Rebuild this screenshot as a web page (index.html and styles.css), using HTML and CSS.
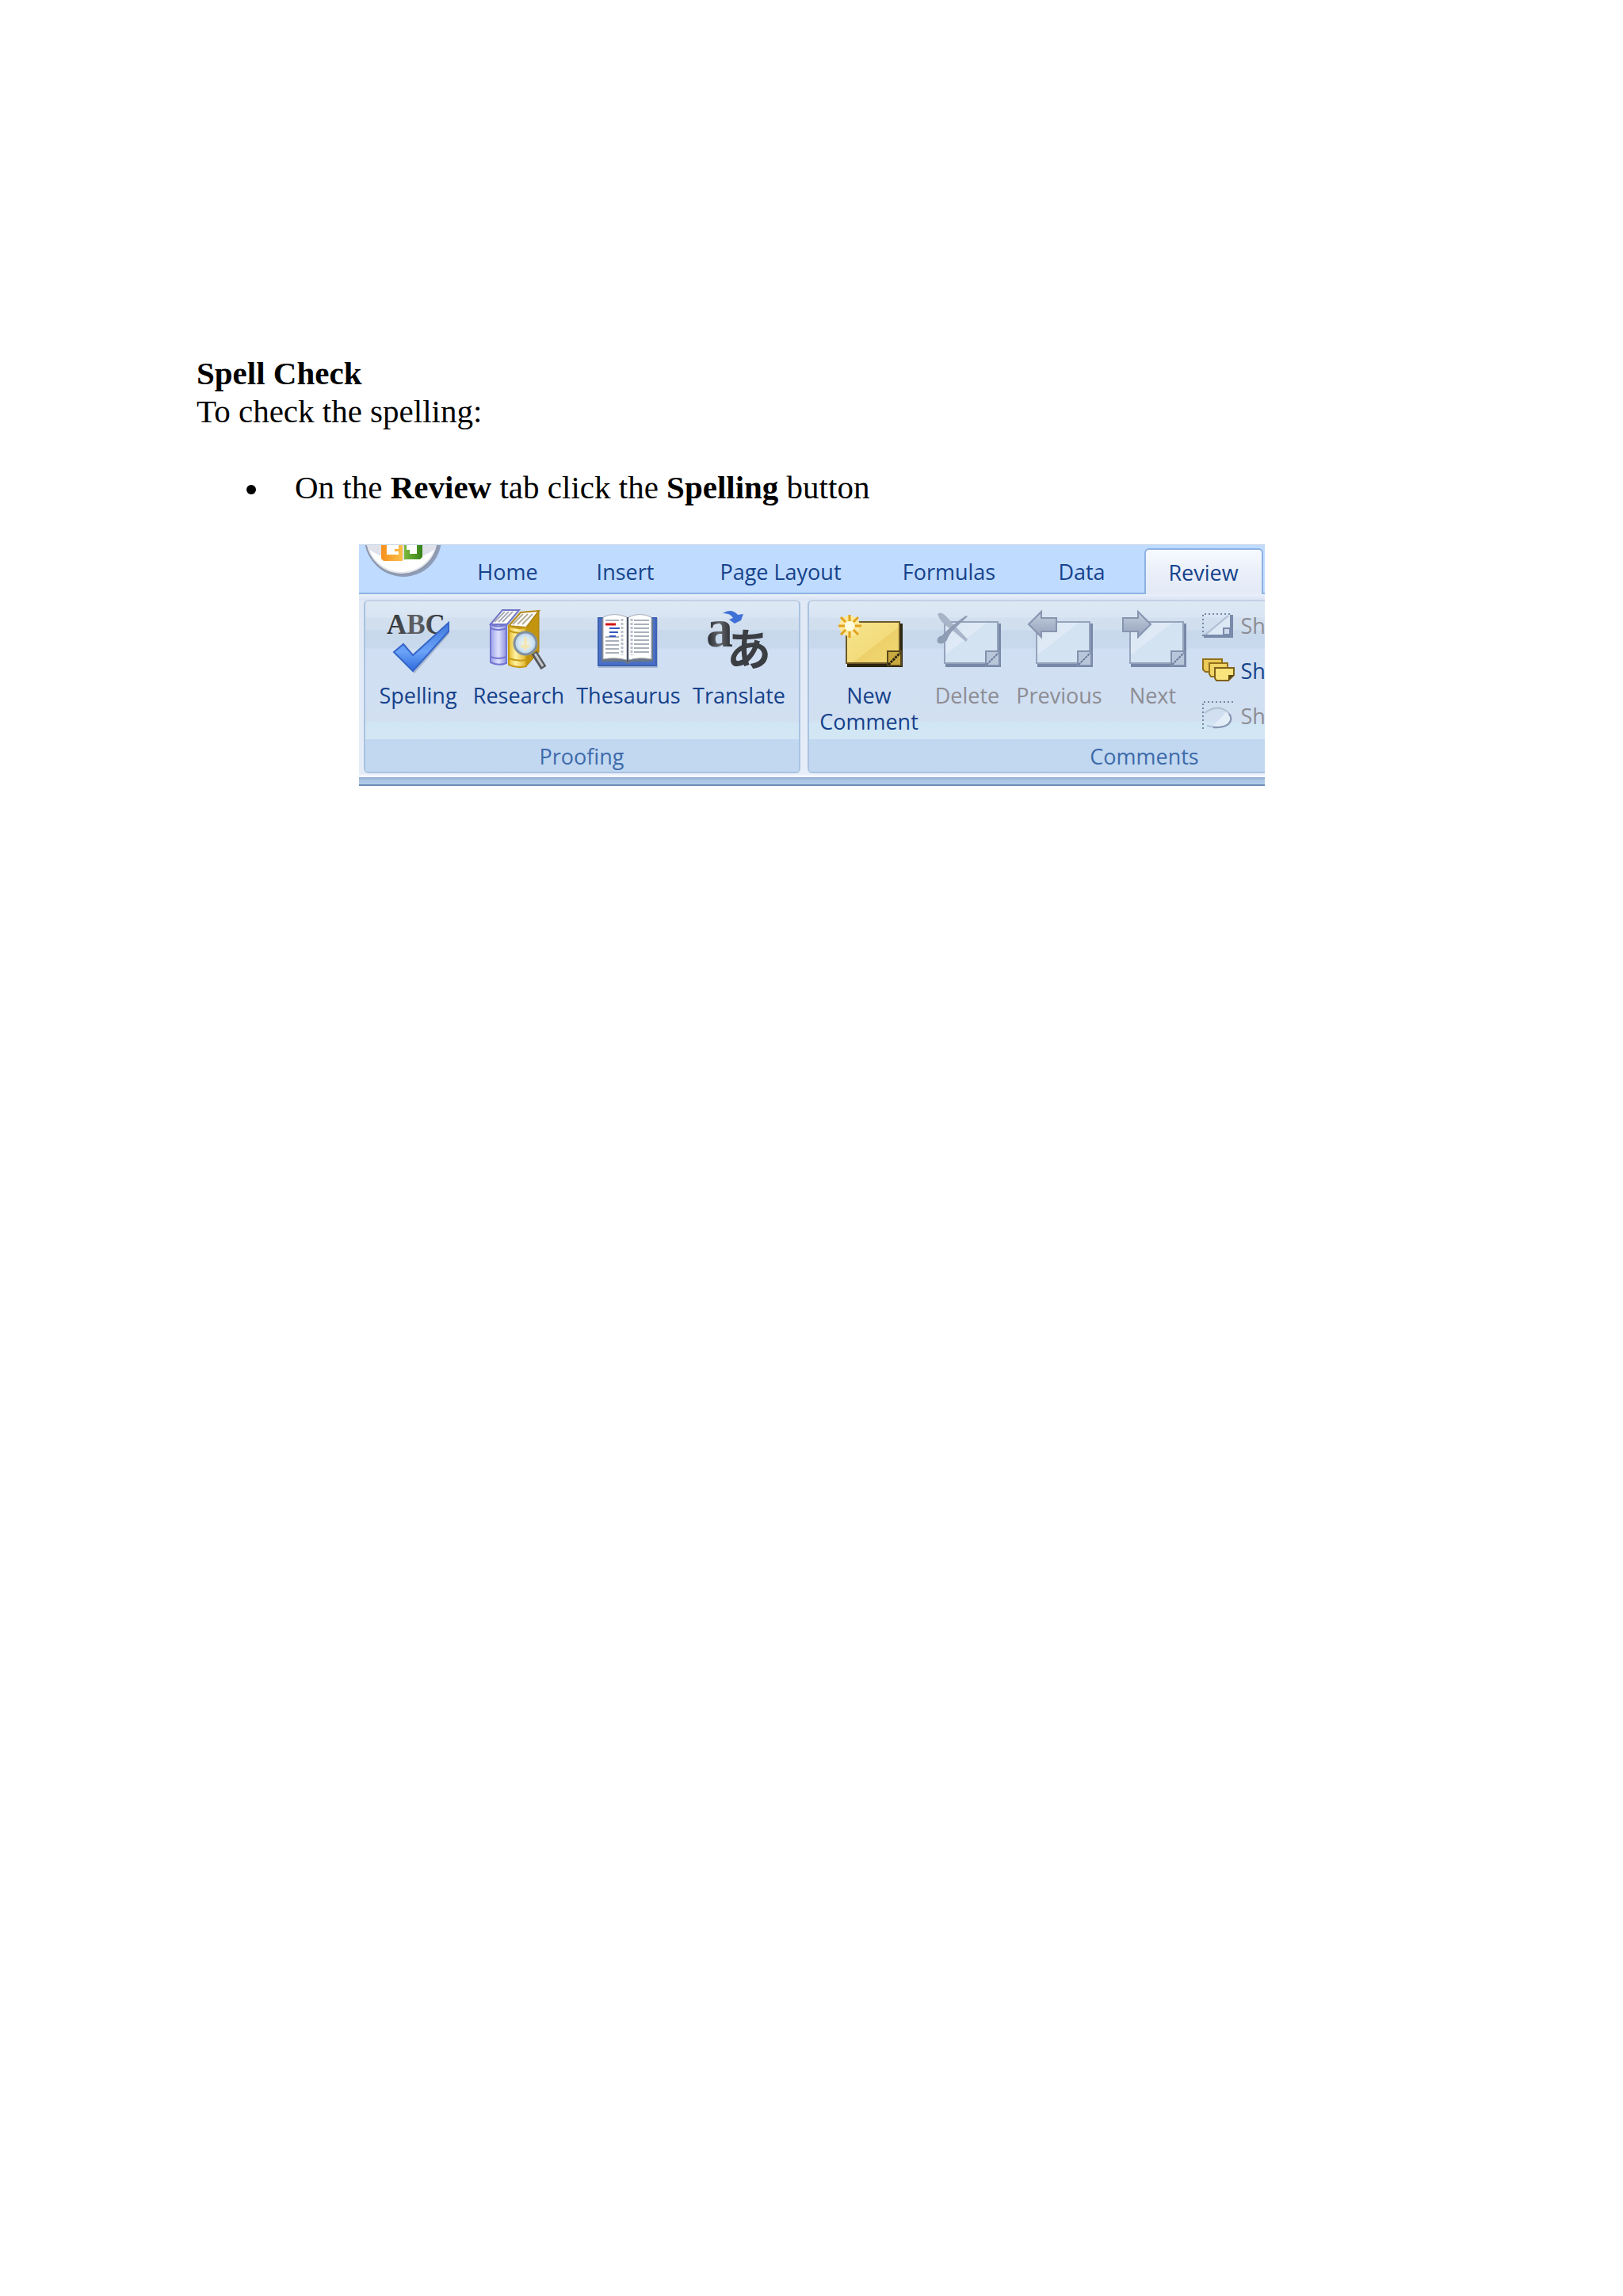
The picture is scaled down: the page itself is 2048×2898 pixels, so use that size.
FILE: index.html
```html
<!DOCTYPE html>
<html lang="en">
<head>
    <meta charset="UTF-8">
    <meta name="viewport" content="width=device-width, initial-scale=1.0">
    <title>Spell Check</title>
    <link rel="stylesheet" href="styles.css">
</head>
<body>
    <svg class="defs" aria-hidden="true">
        <defs>
            <linearGradient id="yellow" x1="0" y1="0" x2="1" y2="1">
                <stop offset="0" stop-color="#f7e48e"/>
                <stop offset="0.55" stop-color="#f3dc7c"/>
                <stop offset="0.56" stop-color="#edd06a"/>
                <stop offset="1" stop-color="#f2d974"/>
            </linearGradient>
            <linearGradient id="pale" x1="0" y1="0" x2="1" y2="1">
                <stop offset="0" stop-color="#dbe6f5"/>
                <stop offset="0.4" stop-color="#dfeaf6"/>
                <stop offset="0.41" stop-color="#d3e3f2"/>
                <stop offset="1" stop-color="#d6e4f3"/>
            </linearGradient>
            <linearGradient id="shade" x1="0" y1="0" x2="0" y2="1">
                <stop offset="0" stop-color="#c3cede"/>
                <stop offset="1" stop-color="#93a1ba"/>
            </linearGradient>
            <linearGradient id="tick" x1="0" y1="0" x2="0" y2="1">
                <stop offset="0" stop-color="#3f78dc"/>
                <stop offset="0.6" stop-color="#6ba3f8"/>
                <stop offset="1" stop-color="#2d69dc"/>
            </linearGradient>
            <linearGradient id="purple" x1="0" y1="0" x2="1" y2="0">
                <stop offset="0" stop-color="#9da0ea"/>
                <stop offset="0.5" stop-color="#dde2fd"/>
                <stop offset="1" stop-color="#8c8fe0"/>
            </linearGradient>
            <linearGradient id="gold" x1="0" y1="0" x2="1" y2="0">
                <stop offset="0" stop-color="#e5bd30"/>
                <stop offset="0.4" stop-color="#fff3a4"/>
                <stop offset="1" stop-color="#e0b52c"/>
            </linearGradient>
            <linearGradient id="ink" x1="0" y1="0" x2="1" y2="0">
                <stop offset="0" stop-color="#25282c"/>
                <stop offset="0.5" stop-color="#63666a"/>
                <stop offset="1" stop-color="#25282c"/>
            </linearGradient>
            <linearGradient id="orange" x1="0" y1="0" x2="1" y2="0">
                <stop offset="0" stop-color="#f7901e"/>
                <stop offset="1" stop-color="#fbc04a"/>
            </linearGradient>
            <linearGradient id="green" x1="0" y1="0" x2="1" y2="0">
                <stop offset="0" stop-color="#7cba3c"/>
                <stop offset="1" stop-color="#348018"/>
            </linearGradient>
            <radialGradient id="lens">
                <stop offset="0" stop-color="#f7f4d8"/>
                <stop offset="0.6" stop-color="#d3e6f4"/>
                <stop offset="1" stop-color="#b3d0ea"/>
            </radialGradient>
            <symbol id="note-yellow" viewBox="0 0 96 84">
                <path d="M20 20H90V75H20z" fill="#2a2410"/>
                <path d="M19 18H86V70H19z" fill="url(#yellow)" stroke="#6d5a2a" stroke-width="2"/>
                <path d="M71 55H88V73H71z" fill="#c9a93f" stroke="#5b4a1c" stroke-width="2"/>
                <path d="M72 72L87 57" stroke="#2a2410" stroke-width="3" stroke-dasharray="3 1"/>
            </symbol>
            <symbol id="note-pale" viewBox="0 0 96 84">
                <path d="M20 20H90V75H20z" fill="#7888a8"/>
                <path d="M19 18H86V70H19z" fill="url(#pale)" stroke="#95a3bc" stroke-width="2"/>
                <path d="M71 55H88V73H71z" fill="#b9c6da" stroke="#8291ad" stroke-width="2"/>
                <path d="M72 72L87 57" stroke="#6a7a9b" stroke-width="2" stroke-dasharray="3 1"/>
            </symbol>
        </defs>
    </svg>

    <main class="page">
        <h1>Spell Check</h1>
        <p>To check the spelling:</p>
        <ul class="steps">
            <li><span>On the <b>Review</b> tab click the <b>Spelling</b> button</span></li>
        </ul>

        <div class="ribbon">
            <div class="tabs">
                <!-- office button, top half cut off -->
                <svg class="orb" viewBox="0 0 112 61" aria-hidden="true">
                    <circle cx="56" cy="-8" r="48" fill="#8f9db8"/>
                    <circle cx="54" cy="-9" r="46" fill="#dfe2ea" stroke="#8d97ab" stroke-width="2"/>
                    <path d="M13 6Q54 32 95 6A44 44 0 0 1 13 6z" fill="#fff"/>
                    <path d="M28 -6H55V20H31L28 17z" fill="url(#orange)"/>
                    <path d="M35 -6H50V5H45V8H50V12H35z" fill="#fff"/>
                    <path d="M57 -6H80V15L77 18H57z" fill="url(#green)"/>
                    <path d="M60 -6H73V11H64V6H60z" fill="#fff"/>
                </svg>
                <button type="button">Home</button>
                <button type="button">Insert</button>
                <button type="button">Page Layout</button>
                <button type="button">Formulas</button>
                <button type="button">Data</button>
                <button type="button" class="active">Review</button>
            </div>

            <div class="groups">
                <section class="group proofing">
                    <div class="tools">
                        <button type="button" class="tool">
                            <svg viewBox="0 0 96 84" aria-hidden="true">
                                <text x="8" y="33" font-family="Liberation Serif, serif" font-weight="bold" font-size="35" fill="url(#ink)">ABC</text>
                                <path d="M18 57L30 49L43 64L87 23V33L43 83z" fill="#a9b8d0"/>
                                <path d="M17 56L29 46L41 60L86 19V30L41 80z" fill="url(#tick)" stroke="#3566c8" stroke-width="2"/>
                            </svg>
                            <span>Spelling</span>
                        </button>
                        <button type="button" class="tool">
                            <svg viewBox="0 0 96 84" aria-hidden="true">
                                <path d="M12 21L27 3H48L33 21z" fill="#fff" stroke="#7275c4" stroke-width="2"/>
                                <path d="M17 18L30 5M22 18L35 5M27 18L40 5" stroke="#a9abb8" stroke-width="2"/>
                                <path d="M12 21Q22 26 32 21V70Q22 74 12 69z" fill="url(#purple)" stroke="#7376d2" stroke-width="2"/>
                                <path d="M12 26Q22 30 32 26M12 62Q22 66 32 62" fill="none" stroke="#7376d2" stroke-width="2"/>
                                <path d="M35 23L50 6L73 4L57 25z" fill="#fff" stroke="#b68a18" stroke-width="2"/>
                                <path d="M40 21L53 8M46 21L59 8M52 21L65 8" stroke="#b5ae96" stroke-width="2"/>
                                <path d="M57 25L73 4V56L57 74z" fill="#c3950f" stroke="#a67d0c" stroke-width="1"/>
                                <path d="M35 23Q46 28 57 25V74Q46 77 35 72z" fill="url(#gold)" stroke="#c79a16" stroke-width="2"/>
                                <path d="M35 29Q46 34 57 31M35 64Q46 68 57 66" fill="none" stroke="#c79a16" stroke-width="2"/>
                                <path d="M67 57L79 76" stroke="#55585e" stroke-width="8"/>
                                <path d="M68 58L78 74" stroke="#c3c6ca" stroke-width="3"/>
                                <circle cx="56" cy="45" r="14" fill="url(#lens)" stroke="#8290a0" stroke-width="3"/>
                                <path d="M56 37V54M50 49H61" stroke="#f5e6ae" stroke-width="3"/>
                            </svg>
                            <span>Research</span>
                        </button>
                        <button type="button" class="tool">
                            <svg viewBox="0 0 96 84" aria-hidden="true">
                                <path d="M10 13H85V76H10z" fill="#a9b8d3"/>
                                <path d="M9 12H84V74H9z" fill="#3c60b4"/>
                                <path d="M11 14H82V72H11z" fill="#4a70c6"/>
                                <path d="M14 14H79V68H52L47 71L42 68H14z" fill="#6b7785"/>
                                <path d="M16 12Q30 5 46 12V66Q32 62 16 65z" fill="#fff" stroke="#a3abb7" stroke-width="1"/>
                                <path d="M48 12Q62 5 77 12V65Q62 62 48 66z" fill="#fff" stroke="#a3abb7" stroke-width="1"/>
                                <path d="M47 12V68" stroke="#4b5360" stroke-width="2"/>
                                <path d="M19 16H36M19 37H36M19 42H36M19 47H36M19 52H36M19 57H36M55 16H74M55 21H74M55 26H74M55 31H74M55 36H74M55 41H74M55 46H74M55 51H74M55 56H74" stroke="#a9b0bb" stroke-width="2"/>
                                <path d="M40 14V60M52 14V60" stroke="#b8bec9" stroke-width="3" stroke-dasharray="3 2"/>
                                <path d="M19 21H32" stroke="#d61414" stroke-width="3"/>
                                <path d="M24 26H37M24 31H35M24 36H32" stroke="#3459c4" stroke-width="2"/>
                            </svg>
                            <span>Thesaurus</span>
                        </button>
                        <button type="button" class="tool">
                            <svg viewBox="0 0 96 84" aria-hidden="true">
                                <text x="6" y="49" font-family="Liberation Serif, serif" font-weight="bold" font-size="68" fill="url(#ink)">a</text>
                                <text x="32" y="73" font-family="Noto Sans CJK JP, sans-serif" font-weight="bold" font-size="56" fill="#3b3e42">あ</text>
                                <path d="M27 7Q38 0 46 9L53 8L50 16L42 20L35 15L40 13Q37 7 27 7z" fill="#3f70d6"/>
                            </svg>
                            <span>Translate</span>
                        </button>
                    </div>
                    <h2>Proofing</h2>
                </section>

                <section class="group comments">
                    <div class="tools">
                        <button type="button" class="tool">
                            <svg viewBox="0 0 96 84" aria-hidden="true">
                                <use href="#note-yellow"/>
                                <circle cx="23" cy="23" r="13" fill="#fbe9a0"/>
                                <path d="M23 9V17M23 30V38M9 23H17M30 23H38M12 12L18 18M28 28L34 34M34 12L28 18M12 34L18 28" stroke="#e2a21c" stroke-width="3"/>
                                <circle cx="23" cy="23" r="6" fill="#fffbe0"/>
                            </svg>
                            <span>New<br>Comment</span>
                        </button>
                        <button type="button" class="tool" disabled>
                            <svg viewBox="0 0 96 84" aria-hidden="true">
                                <use href="#note-pale"/>
                                <path d="M10 8Q14 4 20 10L32 23L48 40L46 43L27 27Q13 19 10 8z" fill="#a8b4c8"/>
                                <path d="M48 11L31 27Q24 34 22 41Q16 48 10 44Q8 37 16 35Q25 24 46 10z" fill="#8e9cb4"/>
                            </svg>
                            <span>Delete</span>
                        </button>
                        <button type="button" class="tool" disabled>
                            <svg viewBox="0 0 96 84" aria-hidden="true">
                                <use href="#note-pale"/>
                                <path d="M9 21L25 5V13H44V30H25V37z" fill="url(#shade)" stroke="#8795b0" stroke-width="2"/>
                            </svg>
                            <span>Previous</span>
                        </button>
                        <button type="button" class="tool" disabled>
                            <svg viewBox="0 0 96 84" aria-hidden="true">
                                <use href="#note-pale"/>
                                <path d="M45 21L29 5V13H10V30H29V37z" fill="url(#shade)" stroke="#8795b0" stroke-width="2"/>
                            </svg>
                            <span>Next</span>
                        </button>
                        <div class="small-tools">
                            <button type="button" disabled>
                                <svg viewBox="0 0 44 41" aria-hidden="true">
                                    <path d="M6 34L37 8V34z" fill="#dde8f5"/>
                                    <path d="M3 34V6H37" fill="none" stroke="#7788a6" stroke-width="2" stroke-dasharray="2 3"/>
                                    <path d="M6 32L35 8" stroke="#b0bdd2" stroke-width="2"/>
                                    <path d="M4 34H39V7" fill="none" stroke="#7a8aaa" stroke-width="4"/>
                                    <path d="M29 24H37V32H29z" fill="#cdd9ea" stroke="#7a8aaa" stroke-width="2"/>
                                </svg>
                                <span>Sh</span>
                            </button>
                            <button type="button">
                                <svg viewBox="0 0 44 41" aria-hidden="true">
                                    <path d="M3 6H27V22H6L3 19z" fill="#ecca58" stroke="#92701c" stroke-width="2"/>
                                    <path d="M11 11H34V28H13L11 25z" fill="#f1d566" stroke="#92701c" stroke-width="2"/>
                                    <path d="M18 17H42V26L35 33H20L18 30z" fill="#f8e37c" stroke="#80601a" stroke-width="2"/>
                                    <path d="M35 33V26H42z" fill="#5d4710"/>
                                </svg>
                                <span>Sh</span>
                            </button>
                            <button type="button" disabled>
                                <svg viewBox="0 0 44 41" aria-hidden="true">
                                    <path d="M3 37V3H43" fill="none" stroke="#7788a6" stroke-width="2" stroke-dasharray="2 3"/>
                                    <path d="M15 34L33 15Q44 24 35 31Q29 36 15 34z" fill="#e3edf8"/>
                                    <path d="M5 17Q20 6 32 14Q43 23 36 30Q28 38 8 33" fill="none" stroke="#b4c1d5" stroke-width="2"/>
                                    <path d="M36 18Q41 25 35 31Q28 36 16 35" fill="none" stroke="#8393b0" stroke-width="2"/>
                                </svg>
                                <span>Sh</span>
                            </button>
                        </div>
                    </div>
                    <h2>Comments</h2>
                </section>
            </div>
            <div class="ribbon-edge"></div>
        </div>
    </main>
</body>
</html>
```

FILE: styles.css
```css
* {
    box-sizing: border-box;
}
body {
    margin: 0;
    background: #fff;
    color: #000;
    font-family: 'Liberation Serif', 'Times New Roman', serif;
    font-size: 41px;
    line-height: 48px;
}
.defs {
    position: absolute;
    width: 0;
    height: 0;
}
.page {
    padding: 447px 248px 48px;
}
h1, h2, p {
    margin: 0;
    font-size: inherit;
}
.steps {
    margin: 48px 0;
    padding: 0 0 0 63px;
    list-style: none;
}
.steps li {
    display: flex;
    align-items: center;
}
.steps li::before {
    content: "";
    width: 12px;
    height: 12px;
    margin: 6px 49px 0 0;
    border-radius: 50%;
    background: #000;
}

/* ribbon */
.ribbon {
    width: 100%;
    max-width: 1143px;
    margin: 0 auto;
    overflow: hidden;
    background: #e1e9f6;
    color: #15428b;
    font-family: 'Open Sans', 'Noto Sans', sans-serif;
    font-size: 27px;
    line-height: 33px;
}
.ribbon button {
    padding: 0;
    border: none;
    background: none;
    color: inherit;
    font: inherit;
}
.ribbon button:disabled {
    color: #8d8d93;
}
.ribbon svg {
    overflow: visible;
}
.tabs {
    display: grid;
    grid-template-columns: 112px 152px 145px 247px 178px 157px 152px;
    height: 63px;
    border-top: 1px solid #c8d6e8;
    background: linear-gradient(#8db2e3, #8db2e3) bottom / 100% 2px no-repeat #bfdbff;
}
.tabs .orb {
    display: block;
    width: 112px;
    height: 61px;
    overflow: hidden;
}
.ribbon .tabs button {
    padding-top: 4px;
}
.ribbon .tabs .active {
    margin: 4px 2px 0 0;
    padding-top: 0;
    border: 2px solid #8db2e3;
    border-bottom: none;
    border-radius: 6px 6px 0 0;
    background: linear-gradient(#f7faff, #ebf0fa 45%, #e3eaf6);
}
.groups {
    display: flex;
    gap: 9px;
    padding: 7px 0 5px 6px;
    background: linear-gradient(#eaf0fb, #dbe4f3 7px, #e1e9f6 8px, #e6edf9 98%, #fff);
}
.group {
    flex: none;
    border: 2px solid #a9c3e0;
    border-top-color: #c3d1e4;
    border-radius: 6px;
    overflow: hidden;
    background: linear-gradient(#dde8f5, #d9e5f3 20px, #d2dfee 21px, #d1deee 36px, #c8d8eb 37px, #c9d9ed 59px, #d0dff3 60px, #d1dff1 150px, #d1e6f4 154px, #d5e8f5);
}
.proofing {
    width: 551px;
}
.comments {
    width: 851px;
}
.tools {
    display: grid;
    height: 174px;
    padding-left: 4px;
}
.proofing .tools {
    grid-template-columns: 126px 128px 149px 130px;
}
.comments .tools {
    grid-template-columns: 144px 104px 128px 108px 120px;
}
.tool {
    display: flex;
    flex-direction: column;
    align-items: center;
}
.ribbon .tool {
    padding-top: 8px;
}
.tool svg {
    width: 96px;
    height: 84px;
    margin-bottom: 10px;
}
.small-tools {
    padding: 2px 0 0 6px;
}
.small-tools button {
    display: flex;
    align-items: center;
    gap: 7px;
    height: 57px;
}
.small-tools svg {
    width: 44px;
    height: 41px;
}
.group h2 {
    height: 41px;
    background: #c1d8f0;
    color: #3e6aaa;
    font-weight: normal;
    line-height: 43px;
    text-align: center;
}
.ribbon-edge {
    height: 11px;
    border-bottom: 2px solid #6d8cb5;
    background: linear-gradient(#8fabcf, #a9c3e2 40%, #b3cdec);
}
```
